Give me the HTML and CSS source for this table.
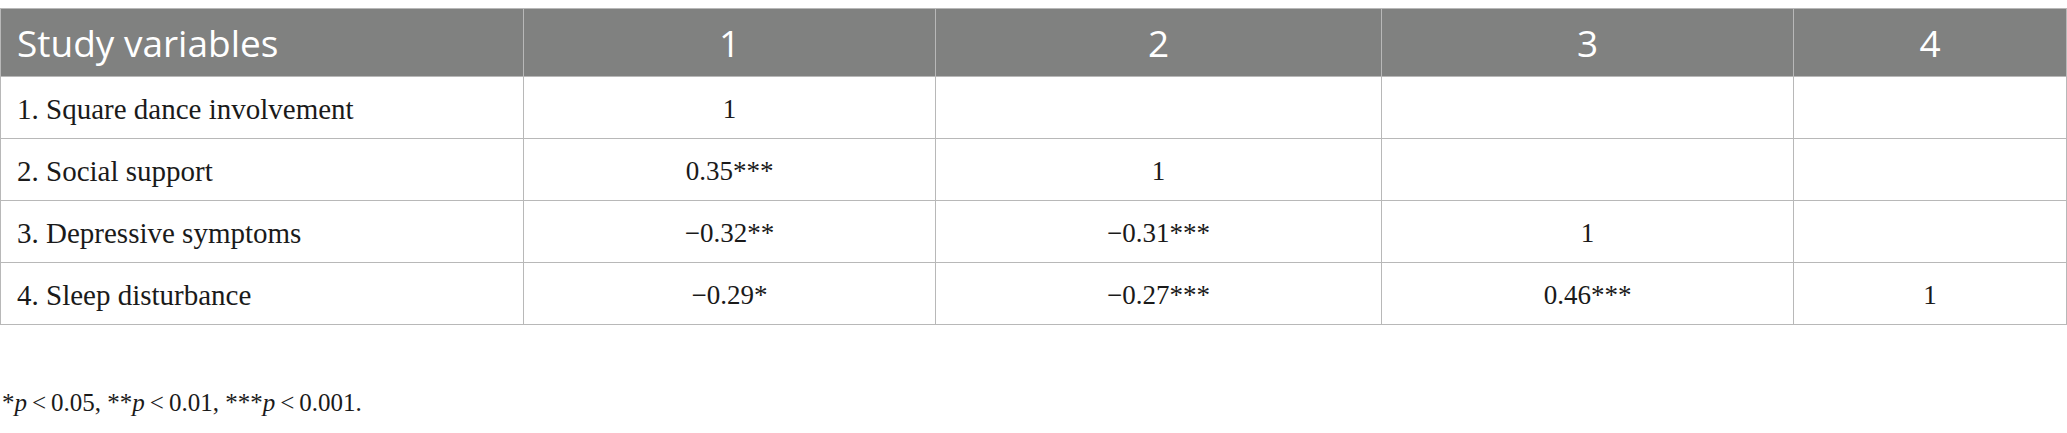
FILE: index.html
```html
<!DOCTYPE html>
<html lang="en">
<head>
<meta charset="utf-8">
<title>Correlations</title>
<link rel="stylesheet" href="styles.css">
</head>
<body>
<div class="wrap">
<table class="corr">
<colgroup>
<col class="c0"><col class="c1"><col class="c2"><col class="c3"><col class="c4">
</colgroup>
<thead>
<tr><th class="lbl">Study variables</th><th>1</th><th>2</th><th>3</th><th>4</th></tr>
</thead>
<tbody>
<tr><td class="lbl">1. Square dance involvement</td><td>1</td><td></td><td></td><td></td></tr>
<tr><td class="lbl">2. Social support</td><td>0.35***</td><td>1</td><td></td><td></td></tr>
<tr><td class="lbl">3. Depressive symptoms</td><td>−0.32**</td><td>−0.31***</td><td>1</td><td></td></tr>
<tr><td class="lbl">4. Sleep disturbance</td><td>−0.29*</td><td>−0.27***</td><td>0.46***</td><td>1</td></tr>
</tbody>
</table>
<p class="note">*<i>p</i>&#8201;&lt;&#8201;0.05, **<i>p</i>&#8201;&lt;&#8201;0.01, ***<i>p</i>&#8201;&lt;&#8201;0.001.</p>
</div>
</body>
</html>
```
FILE: styles.css
```css
html, body {
  margin: 0;
  padding: 0;
  background: #ffffff;
}
.wrap {
  padding-top: 8px;
}
.corr {
  border-collapse: collapse;
  table-layout: fixed;
  width: 2066px;
  font-family: "Liberation Serif", "Times New Roman", serif;
  font-size: 27px;
  color: #1a1a1a;
}
.c0 { width: 523px; }
.c1 { width: 412px; }
.c2 { width: 446px; }
.c3 { width: 412px; }
.c4 { width: 273px; }
.corr th, .corr td {
  border: 1px solid #b8b8b8;
  text-align: center;
  vertical-align: middle;
  padding: 0 16px;
}
.corr th {
  background: #808180;
  color: #ffffff;
  font-family: "Open Sans", "Noto Sans", sans-serif;
  font-weight: 400;
  font-size: 37px;
  height: 67px;
}
.corr td {
  height: 57px;
  padding-top: 4px;
}
.corr td.lbl {
  font-size: 29px;
}
.corr .lbl {
  text-align: left;
}
.note {
  margin: 64px 0 0 2px;
  font-family: "Liberation Serif", "Times New Roman", serif;
  font-size: 25px;
  color: #1a1a1a;
}
```
